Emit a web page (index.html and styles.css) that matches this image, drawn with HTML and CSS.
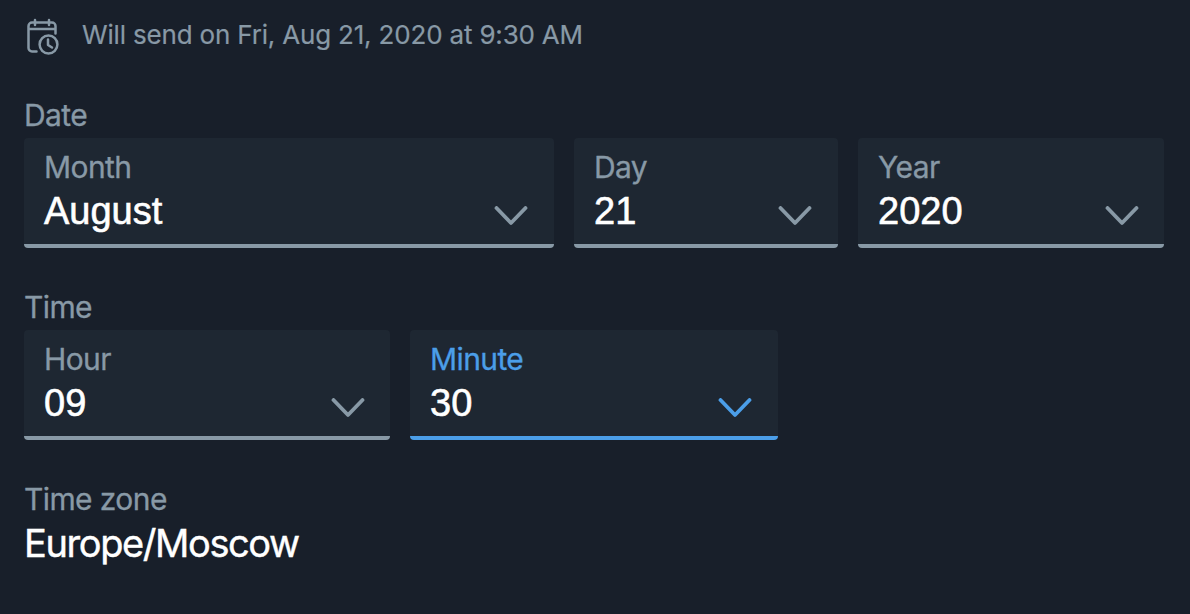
FILE: index.html
```html
<!DOCTYPE html>
<html lang="en">

<head>
    <meta charset="UTF-8">
    <link rel="stylesheet" href="styles.css">
    <title>Schedule</title>
</head>

<body>
    <div class="schedule">
        <div class="summary">
            <svg class="calendar" viewBox="0 0 36 38">
                <path d="M10.500 33.500H6a3.500 3.500 0 0 1-3.500-3.500V8A3.500 3.500 0 0 1 6 4.500H26A3.500 3.500 0 0 1 29.500 8V15.500M2.500 11H29.500M9 2V7M23 2V7" />
                <circle cx="22.500" cy="26.500" r="8.900" />
                <path d="M22 21.500V27L26 29.500" />
            </svg>
            <span class="summary-text">Will send on Fri, Aug 21, 2020 at 9:30 AM</span>
        </div>

        <div class="group">
            <div class="group-label">Date</div>
            <div class="row">
                <div class="field month">
                    <div class="label">Month</div>
                    <div class="value">August</div>
                    <svg class="arrow" viewBox="0 0 34 20"><path d="M2.500 2L17 17L31.500 2" /></svg>
                </div>
                <div class="field day">
                    <div class="label">Day</div>
                    <div class="value">21</div>
                    <svg class="arrow" viewBox="0 0 34 20"><path d="M2.500 2L17 17L31.500 2" /></svg>
                </div>
                <div class="field year">
                    <div class="label">Year</div>
                    <div class="value">2020</div>
                    <svg class="arrow" viewBox="0 0 34 20"><path d="M2.500 2L17 17L31.500 2" /></svg>
                </div>
            </div>
        </div>

        <div class="group">
            <div class="group-label">Time</div>
            <div class="row">
                <div class="field hour">
                    <div class="label">Hour</div>
                    <div class="value">09</div>
                    <svg class="arrow" viewBox="0 0 34 20"><path d="M2.500 2L17 17L31.500 2" /></svg>
                </div>
                <div class="field minute active">
                    <div class="label">Minute</div>
                    <div class="value">30</div>
                    <svg class="arrow" viewBox="0 0 34 20"><path d="M2.500 2L17 17L31.500 2" /></svg>
                </div>
            </div>
        </div>

        <div class="group">
            <div class="group-label">Time zone</div>
            <div class="zone">Europe/Moscow</div>
        </div>
    </div>
</body>

</html>
```
FILE: styles.css
```css
* {
    box-sizing: border-box;
}

body {
    margin: 0;
    height: 614px;
    overflow: hidden;
    background-color: #181f2a;
    color: #8899a6;
    font-family: Inter, "Liberation Sans", sans-serif;
    font-size: 30px;
    letter-spacing: -0.6px;
}

.schedule {
    padding: 12px 24px 0;
}

.summary {
    display: flex;
    align-items: center;
    height: 46px;
    margin-bottom: 38px;
}

.summary-text {
    margin-left: 20px;
    font-size: 26px;
    line-height: 44px;
    letter-spacing: -0.18px;
    white-space: nowrap;
    -webkit-text-stroke: 0.2px #8899a6;
}

svg {
    fill: none;
    stroke: #8899a6;
    stroke-linecap: round;
    stroke-linejoin: round;
}

.calendar {
    width: 36px;
    height: 38px;
    margin: 4px 0 0 2px;
    stroke-width: 2.5;
}

.group {
    margin-bottom: 40px;
}

.group-label {
    height: 42px;
    line-height: 38px;
    -webkit-text-stroke: 0.3px #8899a6;
}

.row {
    display: flex;
    gap: 20px;
}

.field {
    display: grid;
    grid-template-columns: 1fr 34px;
    grid-template-rows: 40px 44px;
    height: 110px;
    padding: 9px 26px 0 20px;
    background-color: #1e2732;
    border-bottom: 4px solid #8899a6;
    border-radius: 4px;
}

.month {
    width: 530px;
}

.day {
    width: 264px;
}

.year {
    width: 306px;
    padding-right: 25px;
}

.hour {
    width: 366px;
    padding-right: 25px;
}

.minute {
    width: 368px;
}

.label {
    grid-column: 1 / 3;
    line-height: 40px;
    -webkit-text-stroke: 0.3px;
}

.value {
    color: white;
    font-family: "Liberation Sans", sans-serif;
    font-size: 38px;
    line-height: 48px;
    letter-spacing: 0;
    -webkit-text-stroke: 0.6px white;
}

.arrow {
    width: 34px;
    height: 20px;
    margin-top: 19px;
    stroke-width: 3.8;
}

.active {
    border-color: #4b9ee8;
    color: #4b9ee8;
}

.active .arrow {
    stroke: #4b9ee8;
}

.zone {
    color: white;
    font-size: 38px;
    line-height: 42px;
    letter-spacing: -1.4px;
    -webkit-text-stroke: 0.4px white;
}
```
